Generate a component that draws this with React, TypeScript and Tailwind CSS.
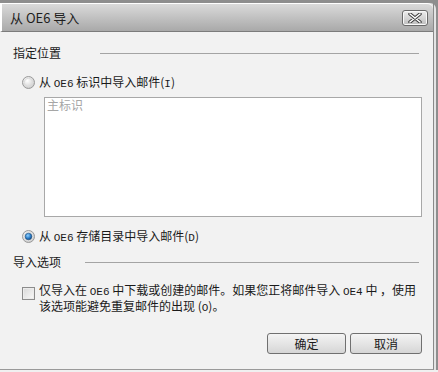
import React from 'react';

const Latin: React.FC<{ children: React.ReactNode }> = ({ children }) => (
  <span className="font-['Liberation_Mono',monospace] text-[11px] leading-none">{children}</span>
);

const Radio: React.FC<{ checked?: boolean }> = ({ checked }) => (
  <svg width="13" height="13" viewBox="0 0 13 13" className="shrink-0">
    <defs>
      <radialGradient id={checked ? 'rg-on' : 'rg-off'} cx="0.4" cy="0.35" r="0.7">
        <stop offset="0" stopColor="#ffffff" />
        <stop offset="1" stopColor="#c8c8c8" />
      </radialGradient>
      <radialGradient id="dot" cx="0.4" cy="0.35" r="0.7">
        <stop offset="0" stopColor="#8fd0ff" />
        <stop offset="0.6" stopColor="#2a7cc7" />
        <stop offset="1" stopColor="#0f3f73" />
      </radialGradient>
    </defs>
    <circle cx="6.5" cy="6.5" r="6" fill={`url(#${checked ? 'rg-on' : 'rg-off'})`} stroke="#9a9a9a" />
    <circle cx="6.5" cy="6.5" r="4.2" fill="none" stroke="#dcdcdc" />
    {checked && <circle cx="6.5" cy="6.5" r="3.3" fill="url(#dot)" stroke="#1c4f82" strokeWidth="0.6" />}
  </svg>
);

const SectionHeader: React.FC<{ title: string; gap: string }> = ({ title, gap }) => (
  <div className="flex items-center h-[16px] pl-[13px] pr-[14px] leading-[16px]">
    <span className="text-[#1a1a1a]">{title}</span>
    <div className={`flex-1 h-px bg-[#a4a4a4] ${gap}`} />
  </div>
);

const App: React.FC = () => {
  return (
    <div className="w-[438px] h-[372px] bg-[#8e8e8e] pt-[3px] overflow-hidden font-['Noto_Sans_CJK_SC','Liberation_Sans',sans-serif] text-[12px]">
      <div className="w-[436px] bg-[#e4e4e4] rounded-tr-[6px]">
        <div className="w-[434px] border-r border-[#8a8a8a] border-b border-b-[#9a9a9a]">
          {/* title bar */}
          <div className="h-[29px] flex items-center justify-between pl-[8px] pr-[5px] border-t border-t-white border-l-2 border-l-white rounded-tr-[6px] border-b border-b-[#7c7c7c] bg-gradient-to-b from-[#dadada] to-[#a9a9a9]">
            <span className="text-[13px] text-[#1e1e1e] leading-[16px]">从 OE6 导入</span>
            <div className="w-[26px] h-[16px] rounded-[3px] border border-[#6a6a6a] bg-gradient-to-b from-[#eeeeee] to-[#bdbdbd] flex items-center justify-center shadow-[inset_0_0_0_1px_#f8f8f8]">
              <svg width="14" height="10" viewBox="0 0 14 10">
                <path d="M2 1 L12 9 M12 1 L2 9" stroke="#3a3a3a" strokeWidth="3.4" strokeLinecap="round" />
                <path d="M2 1 L12 9 M12 1 L2 9" stroke="#ffffff" strokeWidth="1.6" strokeLinecap="round" />
              </svg>
            </div>
          </div>

          {/* body */}
          <div className="h-[337px] bg-[#f2f2f2] pt-[13px] text-[#1a1a1a]">
            <SectionHeader title="指定位置" gap="ml-[39px]" />

            <div className="flex items-center h-[16px] gap-[4px] ml-[22px] mt-[13px] leading-[16px]">
              <Radio />
              <span>从 <Latin>OE6</Latin> 标识中导入邮件(<Latin>I</Latin>)</span>
            </div>

            <div className="ml-[44px] mt-[7px] w-[378px] h-[120px] bg-white border border-[#a8a8a8] px-[2px] leading-[14px] text-[#a6a6a6]">
              主标识
            </div>

            <div className="flex items-center h-[16px] gap-[4px] ml-[22px] mt-[11px] leading-[16px]">
              <Radio checked />
              <span>从 <Latin>OE6</Latin> 存储目录中导入邮件(<Latin>D</Latin>)</span>
            </div>

            <div className="mt-[10px]">
              <SectionHeader title="导入选项" gap="ml-[24px]" />
            </div>

            <div className="flex items-start gap-[4px] ml-[22px] mt-[12px] pr-[10px]">
              <div className="mt-[5px] w-[13px] h-[13px] shrink-0 border border-[#8c8c8c] bg-gradient-to-br from-[#d8d8d8] to-[#fafafa] shadow-[inset_0_0_0_1px_#ececec]" />
              <div className="whitespace-nowrap">
                <div className="h-[16px] leading-[16px]">
                  仅导入在 <Latin>OE6</Latin> 中下载或创建的邮件。如果您正将邮件导入 <Latin>OE4</Latin> 中 ，使用
                </div>
                <div className="h-[16px] leading-[16px]">
                  该选项能避免重复邮件的出现 (<Latin>O</Latin>)。
                </div>
              </div>
            </div>

            <div className="flex justify-end gap-[4px] pr-[11px] mt-[19px]">
              <button className="w-[79px] h-[21px] rounded-[3px] border border-[#707070] bg-gradient-to-b from-[#f4f4f4] to-[#d6d6d6] text-[12px] leading-[16px] text-[#1a1a1a]">
                确定
              </button>
              <button className="w-[72px] h-[21px] rounded-[3px] border border-[#707070] bg-gradient-to-b from-[#f4f4f4] to-[#d6d6d6] text-[12px] leading-[16px] text-[#1a1a1a]">
                取消
              </button>
            </div>
          </div>
        </div>
      </div>
      <div className="h-[3px] bg-[#f0f0f0]" />
    </div>
  );
};

export default App;
